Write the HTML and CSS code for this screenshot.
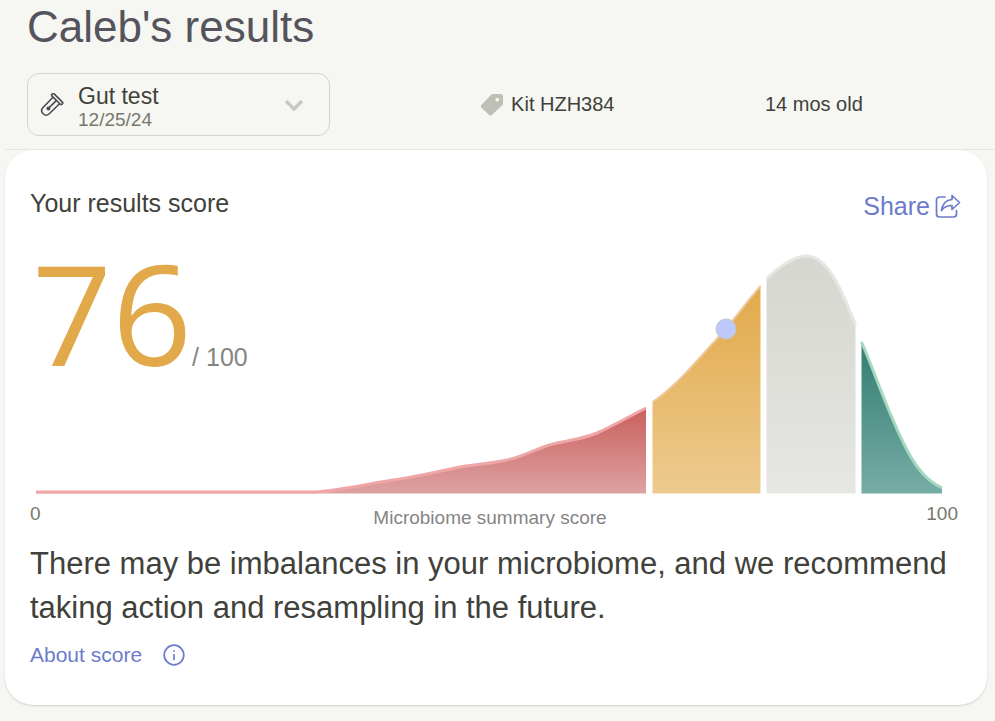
FILE: index.html
```html
<!DOCTYPE html>
<html lang="en">
    <head>
        <meta charset="utf-8">
        <meta name="viewport" content="width=device-width, initial-scale=1">
        <title>Caleb's results</title>
        <link rel="stylesheet" href="styles.css">
    </head>
    <body>
        <header class="top">
            <h1>Caleb's results</h1>
            <div class="kitrow">
                <div class="picker">
                    <svg class="tube" viewBox="0 0 24 24" aria-hidden="true">
                        <path d="M13 4.3 2.8 14.8a4.4 4.4 0 0 0 6.2 6.2L19.5 10.8"/>
                        <rect x="10.2" y="4.6" width="14" height="3" rx="1.2" transform="rotate(45 17.2 6.1)"/>
                        <path d="m16.2 7.6-4 4M8 15.8l5.2-5.2"/>
                        <circle class="drop" cx="8.4" cy="15.4" r="1.2"/>
                    </svg>
                    <div class="pickertext">
                        <select id="test" aria-label="Test">
                            <option>Gut test</option>
                        </select>
                        <label for="test">12/25/24</label>
                    </div>
                    <svg class="chevron" viewBox="0 0 20 12" aria-hidden="true">
                        <path d="m2 2 8 8 8-8"/>
                    </svg>
                </div>
                <div class="kit">
                    <svg class="tag" viewBox="0 0 22 22" aria-hidden="true">
                        <path fill-rule="evenodd" d="M12 0h7.5A2.5 2.5 0 0 1 22 2.5V9.5a3 3 0 0 1-.9 2.1L11.3 20.6a2.6 2.6 0 0 1-3.7 0L.8 14.1a2.6 2.6 0 0 1 0-3.7L9.9.9A3 3 0 0 1 12 0Zm4.3 3.7a1.9 1.9 0 1 0 0 3.8 1.9 1.9 0 0 0 0-3.8Z"/>
                    </svg>
                    <span>Kit HZH384</span>
                </div>
                <span>14 mos old</span>
            </div>
        </header>

        <main class="card">
            <div class="cardhead">
                <h2>Your results score</h2>
                <button class="share" type="button">
                    Share
                    <svg viewBox="0 0 26 24" aria-hidden="true">
                        <path d="M10 3H4.5A3 3 0 0 0 1.5 6v14a3 3 0 0 0 3 3h14a3 3 0 0 0 3-3v-3.5"/>
                        <path d="M17 1.5 24.5 8.5 17 15.5v-4c-5 0-8 1.5-10.5 5C7.5 9.5 11 6 17 5.5Z"/>
                    </svg>
                </button>
            </div>

            <div class="scorearea">
                <div class="score">
                    <span class="value">76</span>
                    <span class="outof">/ 100</span>
                </div>
                <svg class="curve" viewBox="36 250 906 244" role="img" aria-label="Microbiome summary score, 76 of 100">
                    <defs>
                        <linearGradient id="low" x1="0" y1="0" x2="0" y2="1">
                            <stop offset="0" stop-color="#c9605e"/>
                            <stop offset="1" stop-color="#dea1a2"/>
                        </linearGradient>
                        <linearGradient id="mid" x1="0" y1="0" x2="0" y2="1">
                            <stop offset="0" stop-color="#e2a94a"/>
                            <stop offset="1" stop-color="#edcb8f"/>
                        </linearGradient>
                        <linearGradient id="good" x1="0" y1="0" x2="0" y2="1">
                            <stop offset="0" stop-color="#d5d6cf"/>
                            <stop offset="1" stop-color="#e6e7e2"/>
                        </linearGradient>
                        <linearGradient id="best" x1="0" y1="0" x2="0" y2="1">
                            <stop offset="0" stop-color="#327c70"/>
                            <stop offset="1" stop-color="#77ada6"/>
                        </linearGradient>
                    </defs>
                    <path fill="url(#low)" d="M36 492H315C345 490 370 483 400 479C425 475 440 471 460 467C480 464 494 463 507 460C525 456 535 449 553 444C568 440 580 440 597 433C613 426 630 416 646 408V493.5H36Z"/>
                    <path class="edge lowedge" d="M36 492H315C345 490 370 483 400 479C425 475 440 471 460 467C480 464 494 463 507 460C525 456 535 449 553 444C568 440 580 440 597 433C613 426 630 416 646 408"/>
                    <path fill="url(#mid)" d="M652.5 402C680 383 702 354 725 330C738 314 750 298 760.5 286V493.5H652.5Z"/>
                    <path class="edge midedge" d="M652.5 402C680 383 702 354 725 330C738 314 750 298 760.5 286"/>
                    <path fill="url(#good)" d="M766.5 279C775 270 792 257 805 256C830 254 846 302 855.5 325V493.5H766.5Z"/>
                    <path class="edge goodedge" d="M766.5 279C775 270 792 257 805 256C830 254 846 302 855.5 325"/>
                    <path fill="url(#best)" d="M861.5 342C874 370 888 414 907 450C918 471 928 481 942 488V493.5H861.5Z"/>
                    <path class="edge bestedge" d="M861.5 342C874 370 888 414 907 450C918 471 928 481 942 488"/>
                    <circle class="marker" cx="726" cy="329" r="10"/>
                </svg>
            </div>
            <div class="axis">
                <span>0</span>
                <span class="axislabel">Microbiome summary score</span>
                <span class="max">100</span>
            </div>

            <p>There may be imbalances in your microbiome, and we recommend taking action and resampling in the future.</p>
            <a class="about" href="#">
                About score
                <svg viewBox="0 0 22 22" aria-hidden="true">
                    <circle cx="11" cy="11" r="9.8"/>
                    <path d="M11 10.5v5"/>
                    <path d="M11 6.8v.1"/>
                </svg>
            </a>
        </main>
    </body>
</html>
```
FILE: styles.css
```css
* {
    box-sizing: border-box;
}
body {
    margin: 0;
    background-color: #f6f7f2;
    color: #40413a;
    font-family: 'Liberation Sans', Arial, sans-serif;
    font-size: 20px;
}
h1, h2, p {
    margin: 0;
    font-weight: 400;
}
h1 {
    color: #55535b;
    font-size: 44px;
    line-height: 48px;
}
.top {
    margin-left: 5px;
    padding: 3px 3px 13px 22px;
    border-bottom: 1px solid #e6e7e2;
}
.kitrow {
    display: grid;
    grid-template-columns: 8fr 5fr 4fr;
    align-items: center;
    margin-top: 22px;
}
.picker {
    display: flex;
    align-items: center;
    max-width: 303px;
    height: 63px;
    padding: 0 25px 0 12px;
    border: 1px solid #d3d4ce;
    border-radius: 12px;
}
.pickertext {
    display: flex;
    flex-direction: column;
    flex: 1;
    padding-top: 4px;
    margin-left: 14px;
}
.pickertext select {
    appearance: none;
    border: 0;
    padding: 0;
    background: none;
    color: #40413a;
    font-family: inherit;
    font-size: 23px;
    line-height: 26px;
}
.pickertext label {
    color: #76776c;
    font-size: 19px;
    line-height: 22px;
}
.tube {
    width: 24px;
    height: 24px;
    fill: none;
    stroke: #4b4954;
    stroke-width: 1.6;
    stroke-linecap: round;
}
.tube .drop {
    fill: #4b4954;
}
.chevron {
    width: 20px;
    height: 12px;
    fill: none;
    stroke: #c8c9c7;
    stroke-width: 3.5;
}
.kit {
    display: flex;
    align-items: center;
    gap: 8px;
}
.tag {
    width: 22px;
    height: 22px;
    fill: #bfc0b5;
}
.card {
    margin: 0 8px 15px 5px;
    padding: 38px 26px 38px 25px;
    background-color: #ffffff;
    border-radius: 28px;
    box-shadow: 0 1px 2px #cfd0ca;
}
.cardhead {
    display: flex;
    justify-content: space-between;
    align-items: flex-start;
}
h2 {
    font-size: 25px;
    line-height: 30px;
}
.share {
    display: flex;
    align-items: center;
    gap: 5px;
    padding: 0;
    border: 0;
    background: none;
    color: #6c7bcb;
    font-family: inherit;
    font-size: 25px;
    line-height: 36px;
}
.share svg {
    width: 26px;
    height: 24px;
}
.share svg, .about svg {
    fill: none;
    stroke: #6c7bcb;
    stroke-width: 1.7;
    stroke-linejoin: round;
    stroke-linecap: round;
}
/* score sits over the flat left end of the curve */
.scorearea {
    display: grid;
    margin-top: 26px;
}
.score, .curve {
    grid-area: 1 / 1;
}
.score {
    display: flex;
    align-items: baseline;
    align-self: start;
    padding: 2px;
}
.value {
    color: #e2a94a;
    font-family: 'Open Sans', 'Noto Sans', sans-serif;
    font-size: 140px;
    line-height: 120px;
}
.outof {
    color: #85867f;
    font-size: 25px;
}
.curve {
    display: block;
    width: calc(100% - 25px);
    margin-left: 6px;
}
.edge {
    fill: none;
    stroke-width: 3;
}
.lowedge {
    stroke: #efa6a6;
}
.midedge {
    stroke: #efc9a0;
    stroke-width: 2;
}
.goodedge {
    stroke: #e6e7e3;
}
.bestedge {
    stroke: #a5d8be;
}
.marker {
    fill: #bfc8fa;
    stroke: #c3c6cf;
    stroke-width: 1;
}
.axis {
    display: grid;
    grid-template-columns: 1fr auto 1fr;
    margin-top: 9px;
    padding-right: 3px;
    color: #76776c;
    font-size: 19px;
    line-height: 22px;
}
.axislabel {
    padding: 4px 8px 0 0;
    color: #858585;
}
.max {
    text-align: right;
}
p {
    margin-top: 13px;
    font-size: 31px;
    line-height: 44px;
}
.about {
    display: flex;
    align-items: center;
    gap: 21px;
    width: fit-content;
    margin-top: 13px;
    color: #6c7bcb;
    font-size: 21px;
    line-height: 24px;
    text-decoration: none;
}
.about svg {
    width: 22px;
    height: 22px;
}
```
